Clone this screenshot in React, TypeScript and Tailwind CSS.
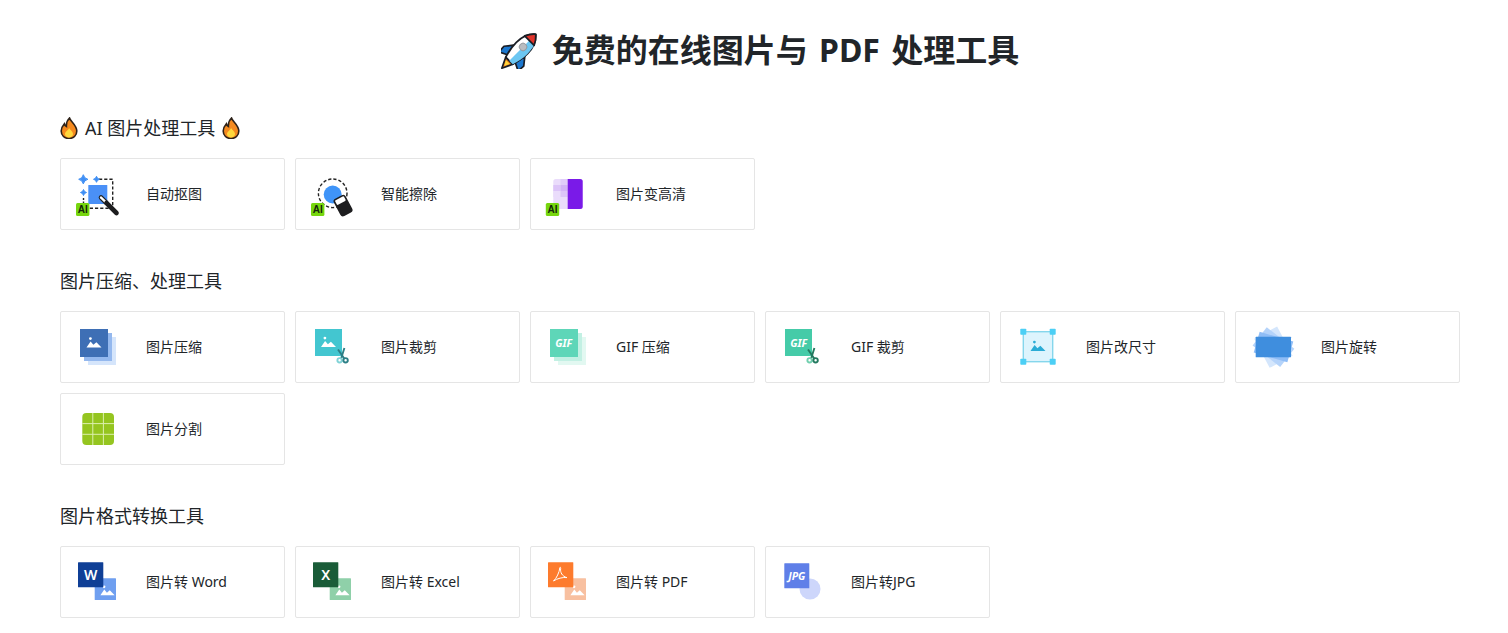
import type { ReactNode } from 'react';

const FONT = '"Noto Sans", "Noto Sans CJK SC", sans-serif';
const BADGE_FONT = '"Liberation Sans", sans-serif';

function Svg({ children }: { children: ReactNode }) {
  return (
    <svg width="48" height="48" viewBox="0 0 48 48" className="shrink-0">
      {children}
    </svg>
  );
}

function Mountain({ cx, cy, s = 1, fill = '#fff' }: { cx: number; cy: number; s?: number; fill?: string }) {
  return (
    <g transform={`translate(${cx} ${cy}) scale(${s})`} fill={fill}>
      <circle cx="-3.6" cy="-4.4" r="1.4" />
      <path d="M-7.5 4.5 L-3.4 -1.6 L-0.6 1.8 L2.4 -0.8 L7.5 4.5 Z" />
    </g>
  );
}

function Badge({ x, y }: { x: number; y: number }) {
  return (
    <g>
      <rect x={x} y={y} width="13.4" height="13" rx="1.5" fill="#76d60e" />
      <text x={x + 6.7} y={y + 10.2} textAnchor="middle" fontSize="10" fontWeight="700" fill="#14260a" fontFamily={BADGE_FONT}>
        AI
      </text>
    </g>
  );
}

function Sparkle({ cx, cy, r }: { cx: number; cy: number; r: number }) {
  const k = r * 0.18;
  return (
    <path
      d={`M${cx} ${cy - r} Q${cx + k} ${cy - k} ${cx + r} ${cy} Q${cx + k} ${cy + k} ${cx} ${cy + r} Q${cx - k} ${cy + k} ${cx - r} ${cy} Q${cx - k} ${cy - k} ${cx} ${cy - r} Z`}
      fill="#3f8ff5"
      stroke="#3f8ff5"
      strokeWidth="1"
      strokeLinejoin="round"
    />
  );
}

function Scissors({ color, tip }: { color: string; tip: string }) {
  return (
    <g fill="none" strokeWidth="1.9">
      <path d="M34.4 25 L31 36" stroke={color} />
      <path d="M28 26.5 L34.6 36" stroke={color} />
      <circle cx="29.6" cy="37.3" r="2.2" stroke={tip} />
      <circle cx="35.6" cy="37.3" r="2.2" stroke={color} />
    </g>
  );
}

const icons = {
  cutout: (
    <Svg>
      <path d="M24 9.3 H37.7 V38.3 H14" fill="none" stroke="#222" strokeWidth="1.4" strokeDasharray="3.2 2" />
      <path d="M8.5 28 V33" fill="none" stroke="#222" strokeWidth="1.4" strokeDasharray="2 1.5" />
      <Sparkle cx={8.3} cy={9.3} r={4.6} />
      <Sparkle cx={21.5} cy={9.3} r={3} />
      <Sparkle cx={8.5} cy={22.5} r={3} />
      <rect x="13.3" y="15" width="19" height="19" rx="0.5" fill="#4a90f7" />
      <path d="M26 27.5 L31 32.5" stroke="#222" strokeWidth="4.6" strokeLinecap="round" />
      <path d="M26 27.5 L31 32.5" stroke="#fff" strokeWidth="2.4" strokeLinecap="round" />
      <path d="M31.5 33 L41.5 43" stroke="#1d1d1f" strokeWidth="4.6" strokeLinecap="round" />
      <Badge x={1} y={33} />
    </Svg>
  ),
  erase: (
    <Svg>
      <circle cx="22.7" cy="23.3" r="14.3" fill="none" stroke="#222" strokeWidth="1.4" strokeDasharray="3.2 2" />
      <circle cx="22.7" cy="24.5" r="9" fill="#3f94f8" />
      <g transform="rotate(-28 33 35.5)">
        <rect x="26.3" y="25.8" width="13.4" height="19.6" rx="3" fill="#1d1d1f" />
        <rect x="28" y="27.3" width="10" height="5.2" rx="1" fill="#fff" />
      </g>
      <Badge x={1} y={33} />
    </Svg>
  ),
  upscale: (
    <Svg>
      <rect x="8.3" y="9" width="29.4" height="30" rx="2.5" fill="#eadcfb" />
      <rect x="15.5" y="9" width="7.2" height="6" fill="#e0ccf9" />
      <rect x="8.3" y="15" width="7.2" height="6" fill="#dcc4f8" />
      <rect x="15.5" y="15" width="7.2" height="6" fill="#d2b3f6" />
      <rect x="8.3" y="21" width="7.2" height="6" fill="#eadcfb" />
      <rect x="15.5" y="21" width="7.2" height="6" fill="#dcc4f8" />
      <rect x="15.5" y="27" width="7.2" height="6" fill="#eadcfb" />
      <path d="M22.7 9 H35.2 A2.5 2.5 0 0 1 37.7 11.5 V36.5 A2.5 2.5 0 0 1 35.2 39 H22.7 Z" fill="#7a1ae8" />
      <Badge x={0.8} y={33} />
    </Svg>
  ),
  compress: (
    <Svg>
      <rect x="13" y="14" width="28" height="28" fill="#d5e5fb" />
      <rect x="9" y="10" width="28" height="28" fill="#94b8ee" />
      <rect x="5" y="6" width="28" height="28" fill="#3e6fb5" />
      <Mountain cx={19} cy={20} />
    </Svg>
  ),
  crop: (
    <Svg>
      <rect x="5" y="6" width="27" height="27" fill="#43c6d0" />
      <Mountain cx={18.5} cy={19.5} />
      <Scissors color="#2c7f86" tip="#7fd2d6" />
    </Svg>
  ),
  gifCompress: (
    <Svg>
      <rect x="13" y="14" width="28" height="28" fill="#e2f8f1" />
      <rect x="9" y="10" width="28" height="28" fill="#c2f0e3" />
      <rect x="5" y="6" width="28" height="28" fill="#5ed6b8" />
      <text x="18.6" y="23.8" textAnchor="middle" fontSize="10.5" fontWeight="700" fontStyle="italic" fill="#fff" fontFamily={FONT}>
        GIF
      </text>
    </Svg>
  ),
  gifCrop: (
    <Svg>
      <rect x="5" y="6" width="27" height="27" fill="#45cba8" />
      <text x="18.6" y="23.8" textAnchor="middle" fontSize="10.5" fontWeight="700" fontStyle="italic" fill="#fff" fontFamily={FONT}>
        GIF
      </text>
      <Scissors color="#23795f" tip="#70cfae" />
    </Svg>
  ),
  resize: (
    <Svg>
      <rect x="8.3" y="8.7" width="29.4" height="30" fill="#ddf4fd" stroke="#85d6ec" strokeWidth="1.4" />
      <rect x="5.3" y="5.7" width="6" height="6" rx="0.8" fill="#4ccff5" />
      <rect x="34.7" y="5.7" width="6" height="6" rx="0.8" fill="#4ccff5" />
      <rect x="5.3" y="35.7" width="6" height="6" rx="0.8" fill="#4ccff5" />
      <rect x="34.7" y="35.7" width="6" height="6" rx="0.8" fill="#4ccff5" />
      <Mountain cx={23} cy={23.5} fill="#2bacd6" />
    </Svg>
  ),
  rotate: (
    <Svg>
      <rect x="7" y="11" width="33" height="26" fill="#d4e6fc" transform="rotate(62 23.3 24)" />
      <rect x="6" y="12.5" width="35" height="23" fill="#b4d3fa" transform="rotate(38 23.3 24)" />
      <rect x="6" y="13.2" width="35" height="21.6" fill="#8fbdf6" transform="rotate(16 23.3 24)" />
      <rect x="5.7" y="13.7" width="35.3" height="20.6" rx="0.5" fill="#3f8ede" />
    </Svg>
  ),
  split: (
    <Svg>
      <rect x="7.3" y="8" width="31.7" height="32" rx="4" fill="#95c520" />
      <path d="M17.8 8 V40 M28.4 8 V40 M7.3 18.6 H39 M7.3 29.3 H39" stroke="#dcefae" strokeWidth="1" />
    </Svg>
  ),
  word: (
    <Svg>
      <rect x="19.7" y="20.3" width="21.3" height="21.7" rx="0.5" fill="#6f9ff0" />
      <Mountain cx={32.5} cy={33} s={0.95} />
      <rect x="3" y="4.3" width="25.3" height="25" rx="0.5" fill="#0f3f96" />
      <text x="15.6" y="22.2" textAnchor="middle" fontSize="14" fontWeight="600" fill="#fff" fontFamily={FONT}>
        W
      </text>
    </Svg>
  ),
  excel: (
    <Svg>
      <rect x="19.7" y="20.3" width="21.3" height="21.7" rx="0.5" fill="#8fd0a9" />
      <Mountain cx={32.5} cy={33} s={0.95} />
      <rect x="3" y="4.3" width="25.3" height="25" rx="0.5" fill="#1a5c38" />
      <text x="15.6" y="22.2" textAnchor="middle" fontSize="14" fontWeight="600" fill="#fff" fontFamily={FONT}>
        X
      </text>
    </Svg>
  ),
  pdf: (
    <Svg>
      <rect x="19.7" y="20.3" width="21.3" height="21.7" rx="0.5" fill="#f8c0a0" />
      <Mountain cx={32.5} cy={33} s={0.95} />
      <rect x="3" y="4.3" width="25.3" height="25" rx="0.5" fill="#fd7b2d" />
      <path
        d="M8.5 23 C11.5 20.5 14.5 14 14.8 9.8 C15 8.6 16 9.4 15.6 11 C15.2 14 17 18.5 22 19.6 C18 19 12 20.5 8.5 23 Z"
        fill="none"
        stroke="#fff"
        strokeWidth="1"
      />
    </Svg>
  ),
  jpg: (
    <Svg>
      <circle cx="30" cy="31" r="10.5" fill="#cdd6fb" />
      <rect x="4.3" y="5.3" width="25" height="25" rx="0.5" fill="#5f7fe8" />
      <text x="16.8" y="21.8" textAnchor="middle" fontSize="10.5" fontWeight="700" fontStyle="italic" fill="#fff" fontFamily={FONT}>
        JPG
      </text>
    </Svg>
  ),
};

const sections: { title: ReactNode; tools: { icon: keyof typeof icons; label: string }[] }[] = [
  {
    title: (
      <>
        <Flame />
        <span className="mx-[7px]">AI 图片处理工具</span>
        <Flame />
      </>
    ),
    tools: [
      { icon: 'cutout', label: '自动抠图' },
      { icon: 'erase', label: '智能擦除' },
      { icon: 'upscale', label: '图片变高清' },
    ],
  },
  {
    title: '图片压缩、处理工具',
    tools: [
      { icon: 'compress', label: '图片压缩' },
      { icon: 'crop', label: '图片裁剪' },
      { icon: 'gifCompress', label: 'GIF 压缩' },
      { icon: 'gifCrop', label: 'GIF 裁剪' },
      { icon: 'resize', label: '图片改尺寸' },
      { icon: 'rotate', label: '图片旋转' },
      { icon: 'split', label: '图片分割' },
    ],
  },
  {
    title: '图片格式转换工具',
    tools: [
      { icon: 'word', label: '图片转 Word' },
      { icon: 'excel', label: '图片转 Excel' },
      { icon: 'pdf', label: '图片转 PDF' },
      { icon: 'jpg', label: '图片转JPG' },
    ],
  },
];

function Flame() {
  return (
    <svg width="18" height="22" viewBox="0 0 18 22" className="shrink-0">
      <path
        d="M9.5 1 C10.5 4.5 16.8 8 16.8 14 C16.8 18.6 13.4 21.5 9 21.5 C4.6 21.5 1.2 18.6 1.2 14 C1.2 10.5 3 8.4 4.4 6.8 C4.8 8.4 5.4 9.2 6.4 9.6 C6.2 6.2 7.4 3 9.5 1 Z"
        fill="#f58a1f"
        stroke="#2e2219"
        strokeWidth="1.6"
      />
      <path d="M9.2 11 C10 13 13 14.4 13 17 C13 19.2 11.2 20.4 9 20.4 C6.8 20.4 5 19.2 5 17 C5 14.8 7.8 13.6 9.2 11 Z" fill="#ffd83d" />
    </svg>
  );
}

function Rocket() {
  return (
    <svg width="37" height="37" viewBox="0 0 37 37" className="shrink-0">
      <g transform="rotate(45 18.5 18.5)" stroke="#1b1e25" strokeWidth="1.7" strokeLinejoin="round">
        <path d="M13.5 33 L18.5 43.5 L23.5 33 Z" fill="#f5861f" />
        <path d="M15.8 35 L18.5 40 L21.2 35 Z" fill="#ffd83d" stroke="none" />
        <path d="M10.5 19 L4.5 26.5 L5 34 L13 30 Z" fill="#1c78cf" />
        <path d="M26.5 19 L32.5 26.5 L32 34 L24 30 Z" fill="#1c78cf" />
        <path d="M18.5 -4.5 C23.6 0 26.5 7.5 26.5 15 C26.5 22 25 28 23.5 33 H13.5 C12 28 10.5 22 10.5 15 C10.5 7.5 13.4 0 18.5 -4.5 Z" fill="#ffffff" />
        <path d="M18.5 4.5 H25.2 C26 7.5 26.5 11 26.5 15 C26.5 22 25 28 23.5 33 H18.5 Z" fill="#6cc7f2" stroke="none" />
        <path d="M18.5 -4.5 C21.4 -2 23.6 1 25.2 4.5 H11.8 C13.4 1 15.6 -2 18.5 -4.5 Z" fill="#e0342b" />
        <circle cx="18.5" cy="13.5" r="3.8" fill="#b9bcc0" strokeWidth="0.8" stroke="#8d9095" />
      </g>
    </svg>
  );
}

function ToolCard({ icon, label }: { icon: keyof typeof icons; label: string }) {
  return (
    <a className="flex h-[72px] w-[225px] items-center rounded-[2px] border border-[#e5e5e5] bg-white pl-[14px] text-[14px] text-[#212529]">
      {icons[icon]}
      <span className="mb-[2px] ml-[23px]">{label}</span>
    </a>
  );
}

export default function App() {
  return (
    <div
      className="h-[633px] overflow-hidden bg-white pl-[60px] pr-[48px] pt-[28px] text-[#212529]"
      style={{ fontFamily: FONT }}
    >
      <h1 className="mb-[42px] flex h-[44px] items-center justify-center text-[32px] font-bold leading-[44px] [word-spacing:3px]">
        <Rocket />
        <span className="ml-[14px]">免费的在线图片与 PDF 处理工具</span>
      </h1>

      {sections.map((section, i) => (
        <section key={i} className="mb-[37px]">
          <h2 className="mb-[16px] flex h-[28px] items-center text-[18px] font-normal leading-[28px]">{section.title}</h2>
          <div className="flex flex-wrap gap-[10px]">
            {section.tools.map(tool => (
              <ToolCard key={tool.label} icon={tool.icon} label={tool.label} />
            ))}
          </div>
        </section>
      ))}
    </div>
  );
}
